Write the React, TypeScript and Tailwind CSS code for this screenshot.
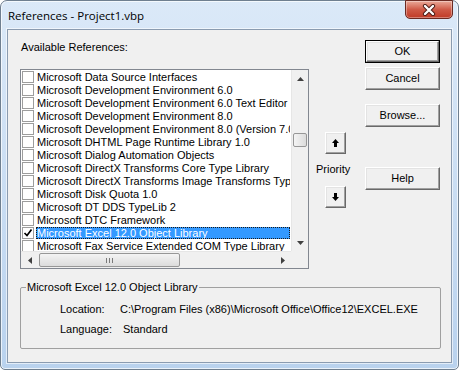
const refs = [
  'Microsoft Data Source Interfaces',
  'Microsoft Development Environment 6.0',
  'Microsoft Development Environment 6.0 Text Editor Package',
  'Microsoft Development Environment 8.0',
  'Microsoft Development Environment 8.0 (Version 7.0 Compatible)',
  'Microsoft DHTML Page Runtime Library 1.0',
  'Microsoft Dialog Automation Objects',
  'Microsoft DirectX Transforms Core Type Library',
  'Microsoft DirectX Transforms Image Transforms Type Library',
  'Microsoft Disk Quota 1.0',
  'Microsoft DT DDS TypeLib 2',
  'Microsoft DTC Framework',
  'Microsoft Excel 12.0 Object Library',
  'Microsoft Fax Service Extended COM Type Library',
];

const SELECTED = 12;

function Btn({ label, isDefault, className = '' }: { label: React.ReactNode; isDefault?: boolean; className?: string }) {
  const inner = (
    <div className="flex-1 flex items-center justify-center bg-[#f0f0f0] border border-t-[#ffffff] border-l-[#ffffff] border-r-[#696969] border-b-[#696969] shadow-[inset_-1px_-1px_0_#a0a0a0,inset_1px_1px_0_#e3e3e3]">
      {label}
    </div>
  );
  if (isDefault) {
    return <div className={`flex border border-black ${className}`}>{inner}</div>;
  }
  return <div className={`flex ${className}`}>{inner}</div>;
}

function Arrow({ dir }: { dir: 'up' | 'down' | 'left' | 'right' }) {
  const pts = {
    up: '0,4 3.5,0 7,4',
    down: '0,0 3.5,4 7,0',
    left: '4,0 0,3.5 4,7',
    right: '0,0 4,3.5 0,7',
  }[dir];
  const horiz = dir === 'left' || dir === 'right';
  return (
    <svg width={horiz ? 4 : 7} height={horiz ? 7 : 4} viewBox={horiz ? '0 0 4 7' : '0 0 7 4'}>
      <polygon points={pts} fill="#404040" />
    </svg>
  );
}

function BoldArrow({ down }: { down?: boolean }) {
  return (
    <svg width="7" height="8" viewBox="0 0 7 8" className={down ? 'rotate-180' : ''}>
      <path d="M3.5 0 L7 4 L5 4 L5 8 L2 8 L2 4 L0 4 Z" fill="#000" />
    </svg>
  );
}

export default function App() {
  return (
    <div className="w-[459px] h-[370px] bg-white font-['Liberation_Sans',Arial,sans-serif] text-[11px] text-black">
      <div className="w-full h-full flex flex-col rounded-t-[7px] rounded-b-[5px] border border-[#6f7f90] bg-gradient-to-b from-[#dbe9f8] to-[#b9d2ee] shadow-[inset_0_0_0_1px_rgba(255,255,255,0.7)] px-[6px] pb-[6px]">
        {/* Title bar */}
        <div className="h-[28px] flex items-start justify-between">
          <div className="mt-[7px] ml-[1px] font-['Open_Sans',sans-serif] text-[11.5px] leading-[15px] text-black">
            References - Project1.vbp
          </div>
          <div className="w-[48px] h-[19px] -mt-px mr-[-1px] rounded-b-[5px] border border-[#6b2a22] bg-gradient-to-b from-[#e9a999] via-[#cf5a47] to-[#c03a26] shadow-[inset_0_0_0_1px_rgba(255,255,255,0.35)] flex items-center justify-center">
            <svg width="14" height="12" viewBox="0 0 14 12">
              <path d="M3 2 L11 10 M11 2 L3 10" stroke="#4a1a14" strokeWidth="4.2" strokeLinecap="round" />
              <path d="M3 2 L11 10 M11 2 L3 10" stroke="#ffffff" strokeWidth="2.4" strokeLinecap="round" />
            </svg>
          </div>
        </div>

        {/* Client area */}
        <div className="flex-1 flex flex-col bg-[#f0f0f0] border border-[#8a9bb0] shadow-[0_0_0_1px_rgba(255,255,255,0.6)] pl-[12px] pt-[10px]">
          <div className="flex">
            {/* References list */}
            <div className="w-[289px] flex flex-col">
              <div className="mt-[1px] h-[13px] leading-[13px] pl-[1px]">Available References:</div>
              <div className="mt-[15px] h-[200px] border border-[#828790] bg-white grid grid-cols-[1fr_17px] grid-rows-[1fr_17px] overflow-hidden">
                <div className="overflow-hidden">
                  {refs.map((r, i) => (
                    <div key={r} className="flex items-start h-[13px]">
                      <div className="mt-[1px] ml-[1px] w-[12px] h-[12px] border border-[#9d9d9d] bg-white flex items-center justify-center shrink-0">
                        {i === SELECTED && (
                          <svg width="10" height="10" viewBox="0 0 10 10">
                            <path d="M1.5 5 L4 7.5 L8.5 1.5" stroke="#000" strokeWidth="1.7" fill="none" />
                          </svg>
                        )}
                      </div>
                      <div
                        className={`mt-[1px] ml-[2px] mr-[1px] flex-1 h-[12px] leading-[12px] px-[1px] whitespace-nowrap overflow-hidden ${
                          i === SELECTED ? 'bg-[#3399ff] text-white outline-1 outline-dotted outline-[#1a1a1a] -outline-offset-1' : ''
                        }`}
                      >
                        {r}
                      </div>
                    </div>
                  ))}
                </div>

                {/* Vertical scrollbar */}
                <div className="flex flex-col bg-[#f0f0f0] border-l border-[#e6e6e6]">
                  <div className="h-[17px] flex items-center justify-center">
                    <Arrow dir="up" />
                  </div>
                  <div className="mt-[46px] mx-[1px] h-[14px] rounded-[2px] border border-[#979797] bg-gradient-to-r from-[#f4f4f4] to-[#dcdcdc]" />
                  <div className="flex-1" />
                  <div className="h-[17px] flex items-center justify-center">
                    <Arrow dir="down" />
                  </div>
                </div>

                {/* Horizontal scrollbar */}
                <div className="flex bg-[#f0f0f0] border-t border-[#e6e6e6]">
                  <div className="w-[17px] flex items-center justify-center">
                    <Arrow dir="left" />
                  </div>
                  <div className="ml-[1px] my-[1px] w-[141px] rounded-[2px] border border-[#979797] bg-gradient-to-b from-[#f4f4f4] to-[#dcdcdc] flex items-center justify-center gap-[2px]">
                    <div className="w-px h-[5px] bg-[#7a7a7a]" />
                    <div className="w-px h-[5px] bg-[#7a7a7a]" />
                    <div className="w-px h-[5px] bg-[#7a7a7a]" />
                  </div>
                  <div className="flex-1" />
                  <div className="w-[17px] flex items-center justify-center">
                    <Arrow dir="right" />
                  </div>
                </div>
                <div className="bg-[#f0f0f0]" />
              </div>
            </div>

            {/* Priority */}
            <div className="ml-[7px] w-[40px] flex flex-col">
              <Btn label={<BoldArrow />} className="mt-[92px] ml-[9px] w-[21px] h-[22px]" />
              <div className="mt-[9px] h-[13px] leading-[13px]">Priority</div>
              <Btn label={<BoldArrow down />} className="mt-[10px] ml-[9px] w-[21px] h-[22px]" />
            </div>

            {/* Buttons */}
            <div className="ml-[9px] w-[75px] flex flex-col">
              <Btn label="OK" isDefault className="h-[23px]" />
              <Btn label="Cancel" className="mt-[4px] h-[23px]" />
              <Btn label="Browse..." className="mt-[14px] h-[23px]" />
              <Btn label="Help" className="mt-[40px] h-[23px]" />
            </div>
          </div>

          <fieldset className="mt-[12px] w-[421px] h-[68px] border border-[#a0a0a0] rounded-[2px]">
            <legend className="ml-[5px] px-[1px] leading-[13px]">Microsoft Excel 12.0 Object Library</legend>
            <div className="mt-[9px] pl-[39px] flex leading-[13px]">
              <div className="w-[60px]">Location:</div>
              <div>C:\Program Files (x86)\Microsoft Office\Office12\EXCEL.EXE</div>
            </div>
            <div className="mt-[7px] pl-[39px] flex leading-[13px]">
              <div className="w-[63px]">Language:</div>
              <div>Standard</div>
            </div>
          </fieldset>
        </div>
      </div>
    </div>
  );
}
